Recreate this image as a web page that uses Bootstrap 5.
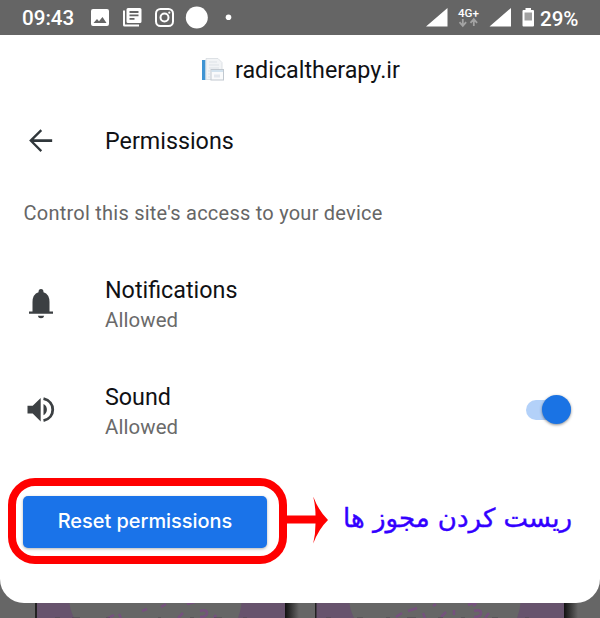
<!DOCTYPE html>
<html lang="en">
<head>
<meta charset="utf-8">
<meta name="viewport" content="width=device-width, initial-scale=1">
<title>Permissions</title>
<link href="https://cdn.jsdelivr.net/npm/bootstrap@5.3.0/dist/css/bootstrap.min.css" rel="stylesheet">
<style>
body{font-family:Roboto,"Liberation Sans",sans-serif;background:#666;color:#101114;width:600px;height:618px;overflow:hidden}
svg{display:block;flex:none}
.screen{height:618px}
.status{height:35px;background:#656565;color:#fff;font-size:20.600px;font-weight:500;line-height:35px;padding:2px 0 0 22px}
.clock{width:53px;flex:none}
.status svg{margin-top:-2px}
.sheet{height:568px;border-radius:0 0 24px 24px;z-index:1}
.site{height:70px;font-size:23.300px;padding-left:200px}
.heading{height:70px;font-size:23.300px}
.heading-text{padding-top:3px}
.icon-cell{width:105px;padding-left:23px}
.note{height:76px;font-size:20px;letter-spacing:.24px;color:#666;padding:0 0 1px 23.500px}
.perm{height:106px}
.perm-text{padding-top:2px}
.perm-text-low{padding-top:4px}
.perm-name{font-size:23.300px;line-height:30px}
.perm-state{font-size:20.400px;letter-spacing:.1px;line-height:30px;color:#6a6a6a}
.toggle{width:45px;height:20px;border-radius:10px;background:#b3d1f9;margin-right:29px;margin-top:-1px}
.knob{width:29.500px;height:29.500px;border-radius:50%;background:#1a73e4;box-shadow:0 1px 3px rgba(0,0,0,.45)}
.actions{padding:15px 0 0 8px}
.ring{width:279px;height:86px;border:8px solid #f00;border-radius:27px;padding:9.500px 0 0 7px}
.reset,.reset:hover{width:244px;height:52px;border-radius:5px;background:#1a73e9;color:#fff;font-size:19.900px;font-weight:500;font-family:Inter,Roboto,sans-serif;padding:0;border:0;box-shadow:0 1px 3px rgba(0,0,0,.3)}
.caption-fa{font-family:"DejaVu Sans",sans-serif;font-size:26px;color:#3300ff;-webkit-text-stroke:.4px #3300ff;line-height:40px;white-space:nowrap;padding:20px 0 0 14px}
.backdrop{z-index:0}
</style>
</head>
<body>
<div class="screen position-relative d-flex flex-column">
<header class="status d-flex align-items-center">
<span class="clock">09:43</span>
<svg width="525" height="35" viewBox="75 0 525 35" fill="#fff">
<path fill-rule="evenodd" d="M93 9h14q2 0 2 2v13q0 2-2 2H93q-2 0-2-2V11q0-2 2-2ZM93.500 23h13l-4-6-3.500 4.200-2-2.200Z"/>
<path fill-rule="evenodd" d="M128 8h12q1.500 0 1.500 1.500v12q0 1.500-1.500 1.500h-12q-1.500 0-1.500-1.500v-12q0-1.500 1.500-1.500ZM129.500 11v2h9v-2ZM129.500 14.500v1.700h9v-1.700ZM129.500 18v1.700h5V18Z"/>
<path d="M123 10.500h2v14h14v2h-14.500q-1.500 0-1.500-1.500Z"/>
<g fill="none" stroke="#fff" stroke-width="2"><rect x="156" y="9" width="17" height="17" rx="4.500"/><circle cx="164.500" cy="17.500" r="4"/></g>
<circle cx="169.300" cy="12.700" r="1.100"/><circle cx="196.800" cy="17.500" r="11"/><circle cx="228.500" cy="17.300" r="2.800"/>
<path d="M447.500 8v18.500H426ZM511 8v18.500H489.500Z"/>
<text x="458" y="16.500" font-size="11" font-weight="500" textLength="21" lengthAdjust="spacingAndGlyphs">4G+</text>
<path d="M462.800 19v6M459.500 22.200l3.300 3.600 3.300-3.600M473.800 26v-6M470.500 22.800l3.300-3.600 3.300 3.600" fill="none" stroke="#a3a3a3" stroke-width="1.800"/>
<path d="M525.500 8h5.500v2h2q1 0 1 1v14.500q0 1-1 1h-9.500q-1 0-1-1V11q0-1 1-1h2Z"/><path fill="#a0a0a0" d="M524.500 12.500h7.500v8h-7.500Z"/>
<text x="540" y="26" font-size="21" font-weight="500" textLength="38.500" lengthAdjust="spacingAndGlyphs">29%</text>
</svg>
</header>
<main class="sheet bg-white position-relative">
<div class="site d-flex align-items-center">
<svg width="35" height="28" viewBox="0 0 35 28"><path d="M2 4h3.500v20H2Z" fill="#3f94d3"/><path d="M6 2.500H18l4 4v17H6Z" fill="#f2f4f6" stroke="#d5dadf" stroke-width=".8"/><path d="M9 6h8M9 9h10M9 12h10M8 15h2M8 18h2M8 21h2" stroke="#dde2e7"/><rect x="11" y="13.500" width="12.500" height="10.500" fill="#f9fafb" stroke="#c1c8cf"/><path d="M11.500 15h11.500" stroke="#c5daea" stroke-width="1.500"/><path d="M14 18.500h6v3h-6Z" fill="#e2e7ed"/></svg>
<span>radicaltherapy.ir</span>
</div>
<div class="heading d-flex align-items-center">
<div class="icon-cell"><svg width="35" height="35" viewBox="0 0 24 24" fill="#30373b"><path d="M20 11.150H7.400l5.700-5.700L12 4.200 4.200 12l7.800 7.800 1.100-1.150-5.700-5.700H20Z"/></svg></div>
<span class="heading-text">Permissions</span>
</div>
<div class="note d-flex align-items-center">Control this site's access to your device</div>
<div class="perm d-flex align-items-center">
<div class="icon-cell"><svg width="36" height="36" viewBox="23 285 36 36" fill="#3c4043"><path d="M41 288q-2.500 0-2.500 3.200-6 2-6 9.800v9.500H29v2.300h24v-2.300h-3.500V301q0-7.800-6-9.800Q43.500 288 41 288ZM37.800 314.800h6.400q-.5 2.500-3.200 2.500t-3.200-2.500Z"/></svg></div>
<div class="perm-text"><div class="perm-name">Notifications</div><div class="perm-state">Allowed</div></div>
</div>
<div class="perm d-flex align-items-center">
<div class="icon-cell"><svg width="36" height="36" viewBox="23 391 36 36" fill="#3c4043"><path d="M27.500 404.700h5.200l8-7.800v23.500l-8-7.800h-5.200ZM43.500 403c4.600 2.200 4.600 9 0 11.300Z"/><path d="M43.500 397.700c12.300 2.700 12.300 19.200 0 21.900" fill="none" stroke="#3c4043" stroke-width="2.800"/></svg></div>
<div class="perm-text-low"><div class="perm-name">Sound</div><div class="perm-state">Allowed</div></div>
<div class="toggle ms-auto d-flex align-items-center justify-content-end" role="switch" aria-checked="true"><div class="knob"></div></div>
</div>
<div class="actions d-flex align-items-start">
<div class="ring"><button class="btn reset" type="button">Reset permissions</button></div>
<svg width="42" height="86" viewBox="287 478 42 86" fill="#f00"><path d="M286 515.500h29.500q0-10-2.300-19 5.500 14.500 14.800 23.500-9.300 9-14.800 23.500 2.300-9 2.300-20H286Z"/></svg>
<div class="caption-fa" dir="rtl" lang="fa">ریست کردن مجوز ها</div>
</div>
</main>
<svg class="backdrop position-absolute bottom-0 start-0" width="600" height="50" viewBox="0 568 600 50">
<defs><linearGradient id="edge"><stop stop-color="#111"/><stop offset="1" stop-color="#666"/></linearGradient></defs>
<path fill="#666" d="M0 568h600v50H0Z"/>
<path fill="#67536d" d="M36 568h249v50H36ZM316 568h248v50H316Z"/>
<path fill="#222" d="M35 568h2v50h-2ZM315 568h1.500v50H315Z"/>
<path fill="url(#edge)" d="M285 568h14v50h-14Z"/><path fill="url(#edge)" d="M564 568h14v50h-14Z"/>
<path fill="#666" d="M69 600h173q-1 10-4 18H74q-4-8-5-18ZM349 600h172q-1 10-4 18H354q-4-8-5-18Z"/>
<g fill="none" stroke="#75517d" stroke-width="2.500"><path d="M187 604l8-2M142 611l5-2M161 607l5-3M108 618l6-3M119 614l2 4M200 611q7-2 7 2t-7 4M178 618l5-5M214 618l2-3M468 605l7-3q2 2-2 4M396 617l6-4M408 611l9-3M423 613l2 5M441 617l5-5M454 615v-5M474 611q7-2 7 2t-7 4M485 618l4-5M433 606l3-2"/></g>
<path stroke="#4c474e" stroke-width=".6" d="M55 617.700h5M72 617.700h8M106 617.700h4M158 617.700h3M190 617.700h4M214 617.700h8M243 617.700h4M326 617.700h5M357 617.700h6M386 617.700h4M407 617.700h9M438 617.700h5M461 617.700h4M492 617.700h6M525 617.700h4"/>
</svg>
</div>
<script src="https://cdn.jsdelivr.net/npm/bootstrap@5.3.0/dist/js/bootstrap.bundle.min.js"></script>
</body>
</html>
